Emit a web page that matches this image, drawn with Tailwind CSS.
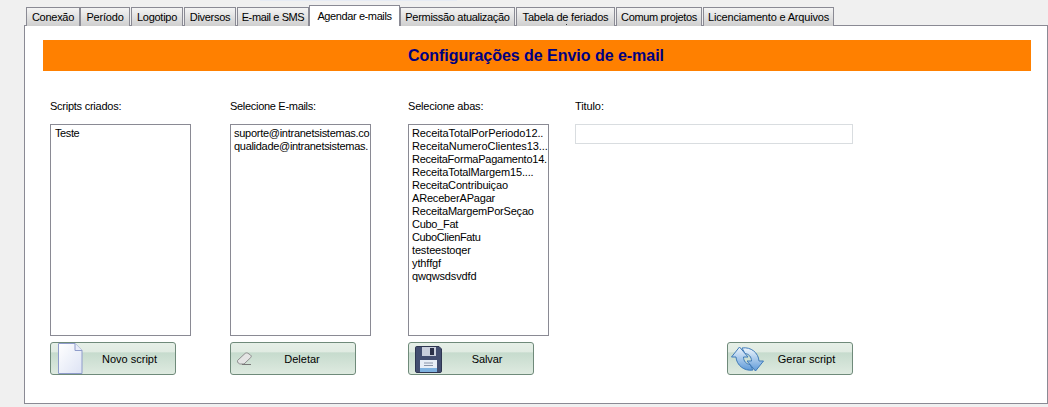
<!doctype html>
<html><head><meta charset="utf-8"><script src="https://cdn.jsdelivr.net/npm/@tailwindcss/browser@4"></script></head>
<body class="m-0 bg-[#f0f0f0]">
<div class="relative w-[1048px] h-[407px] overflow-hidden font-['Liberation_Sans',sans-serif] text-[11px] leading-[14px] text-black pl-[24px] pt-[5px]">
  <div class="absolute left-[260px] top-0 w-[197px] h-[1px] bg-[#e6ebf4]"></div>
  <div class="absolute left-[566px] top-[24px] w-[1px] h-[1px] bg-[#333] z-20"></div>
  <div class="flex items-end h-[21px] pl-[2px] relative z-10 mb-[-1px]">
    <div class="w-[54px] h-[19px] border border-b-0 border-[#8a8a94] bg-gradient-to-b from-[#f4f4f4] to-[#cfcfcf] text-center pt-[2px] tracking-[-0.27px]">Conexão</div>
    <div class="w-[50px] h-[19px] mr-[1px] border border-b-0 border-[#8a8a94] bg-gradient-to-b from-[#f4f4f4] to-[#cfcfcf] text-center pt-[2px] tracking-[-0.2px]">Período</div>
    <div class="w-[52px] h-[19px] mr-[1px] border border-b-0 border-[#8a8a94] bg-gradient-to-b from-[#f4f4f4] to-[#cfcfcf] text-center pt-[2px] tracking-[-0.25px]">Logotipo</div>
    <div class="w-[52px] h-[19px] mr-[1px] border border-b-0 border-[#8a8a94] bg-gradient-to-b from-[#f4f4f4] to-[#cfcfcf] text-center pt-[2px] tracking-[-0.28px]">Diversos</div>
    <div class="w-[72px] h-[19px] border border-b-0 border-[#8a8a94] bg-gradient-to-b from-[#f4f4f4] to-[#cfcfcf] text-center pt-[2px] tracking-[-0.38px]">E-mail e SMS</div>
    <div class="w-[91px] h-[21px] border border-b-0 border-[#8a8a94] bg-white text-center pt-[3px] tracking-[-0.4px]">Agendar e-mails</div>
    <div class="w-[115px] h-[19px] mr-[1px] border border-b-0 border-[#8a8a94] bg-gradient-to-b from-[#f4f4f4] to-[#cfcfcf] text-center pt-[2px] tracking-[-0.3px]">Permissão atualização</div>
    <div class="w-[99px] h-[19px] mr-[1px] border border-b-0 border-[#8a8a94] bg-gradient-to-b from-[#f4f4f4] to-[#cfcfcf] text-center pt-[2px] tracking-[-0.23px]">Tabela de feriados</div>
    <div class="w-[86px] h-[19px] mr-[1px] border border-b-0 border-[#8a8a94] bg-gradient-to-b from-[#f4f4f4] to-[#cfcfcf] text-center pt-[2px] tracking-[-0.35px]">Comum projetos</div>
    <div class="w-[131px] h-[19px] border border-b-0 border-[#8a8a94] bg-gradient-to-b from-[#f4f4f4] to-[#cfcfcf] text-center pt-[2px] tracking-[-0.18px]">Licenciamento e Arquivos</div>
  </div>
  <div class="h-[379px] border border-[#8a8a94] bg-white pt-[14px] pl-[18px] pr-[16px]">
    <div class="h-[31px] bg-[#ff8000] text-[#000080] font-bold text-[16px] leading-[31px] text-center pr-[2px] tracking-[-0.03px]">Configurações de Envio de e-mail</div>
    <div class="flex pl-[7px] pt-[28px]">
      <div class="w-[141px] mr-[39px]">
        <div class="h-[25px] tracking-[-0.25px]">Scripts criados:</div>
        <div class="h-[212px] border border-[#8a8a94] px-[4px] pt-[2px] leading-[13px] tracking-[-0.4px]">Teste</div>
        <button class="mt-[6px] w-[126px] h-[33px] relative rounded-[3px] border border-[#6f8a7a] bg-[linear-gradient(#e6efe7_0,#e0ebe2_30%,#c6dbcd_31%,#deeae0_100%)] pl-[33px] text-center text-[11px]">
          <svg class="absolute left-[7px] top-0" width="25" height="31" viewBox="0 0 25 31"><defs><linearGradient id="p" x1="0" y1="0" x2="1" y2="1"><stop offset="0" stop-color="#fff"/><stop offset="1" stop-color="#dde3f4"/></linearGradient></defs><path d="M0.500 0.500H17L24 7.500V30.500H0.500Z" fill="url(#p)" stroke="#8f9ccb"/><path d="M17 0.500V7.500H24" fill="#e8ecf8" stroke="#8f9ccb"/></svg>
          Novo script
        </button>
      </div>
      <div class="w-[141px] mr-[37px]">
        <div class="h-[25px] tracking-[-0.3px]">Selecione E-mails:</div>
        <div class="h-[212px] border border-[#8a8a94] pl-[3px] pt-[2px] leading-[13px] whitespace-nowrap">
          <div class="tracking-[-0.27px]">suporte@intranetsistemas.co</div>
          <div class="tracking-[-0.3px]">qualidade@intranetsistemas.</div>
        </div>
        <button class="mt-[6px] w-[126px] h-[33px] relative rounded-[3px] border border-[#6f8a7a] bg-[linear-gradient(#e6efe7_0,#e0ebe2_30%,#c6dbcd_31%,#deeae0_100%)] pl-[18px] text-center text-[11px]">
          <svg class="absolute left-[5px] top-[6px]" width="18" height="18" viewBox="0 0 18 18"><path d="M1.500 11.500L9 4.500C10 3.700 11 3.700 12 4.300L14.500 6C15.500 6.800 15.500 7.800 14.700 8.600L8 15H4.500C3 15 1 13.500 1.500 11.500Z" fill="#e4e4e4" stroke="#8d8d8d"/><path d="M6 15.500H15" stroke="#777"/></svg>
          Deletar
        </button>
      </div>
      <div class="w-[141px] mr-[26px]">
        <div class="h-[25px] tracking-[-0.2px]">Selecione abas:</div>
        <div class="h-[212px] border border-[#8a8a94] pl-[3px] pt-[2px] whitespace-nowrap leading-[13px]">
          <div class="tracking-[-0.1px]">ReceitaTotalPorPeriodo12..</div>
          <div class="tracking-[-0.07px]">ReceitaNumeroClientes13...</div>
          <div class="tracking-[-0.24px]">ReceitaFormaPagamento14.</div>
          <div class="tracking-[-0.16px]">ReceitaTotalMargem15....</div>
          <div class="tracking-[-0.17px]">ReceitaContribuiçao</div>
          <div class="tracking-[-0.18px]">AReceberAPagar</div>
          <div class="tracking-[-0.2px]">ReceitaMargemPorSeçao</div>
          <div class="tracking-[-0.27px]">Cubo_Fat</div>
          <div class="tracking-[-0.38px]">CuboClienFatu</div>
          <div class="tracking-[-0.15px]">testeestoqer</div>
          <div class="tracking-[-0.1px]">ythffgf</div>
          <div class="tracking-[-0.15px]">qwqwsdsvdfd</div>
        </div>
        <button class="mt-[6px] w-[126px] h-[33px] relative rounded-[3px] border border-[#6f8a7a] bg-[linear-gradient(#e6efe7_0,#e0ebe2_30%,#c6dbcd_31%,#deeae0_100%)] pl-[32px] text-center text-[11px] tracking-[-0.1px]">
          <svg class="absolute left-[6px] top-[3px]" width="27" height="27" viewBox="0 0 27 27"><path d="M1.500 0.500H24L26.500 3V25C26.500 26 26 26.500 25 26.500H2C1 26.500 0.500 26 0.500 25V1.500C0.500 1 1 0.500 1.500 0.500Z" fill="#434e70" stroke="#2e3650"/><rect x="7" y="1" width="14" height="9" fill="#c9cfdc"/><rect x="15" y="2" width="4" height="7" fill="#2a3048"/><rect x="5" y="14" width="17" height="12" fill="#e8eef6"/><rect x="5" y="22" width="17" height="4" fill="#7fb2e0"/><path d="M9 17H18M9 19.500H18" stroke="#8a94a8"/></svg>
          Salvar
        </button>
      </div>
      <div class="w-[278px]">
        <div class="h-[25px] tracking-[-0.1px]">Titulo:</div>
        <div class="h-[20px] border border-[#d9dde0] bg-white"></div>
        <button class="mt-[198px] ml-[152px] block w-[126px] h-[33px] relative rounded-[3px] border border-[#6f8a7a] bg-[linear-gradient(#e6efe7_0,#e0ebe2_30%,#c6dbcd_31%,#deeae0_100%)] pl-[33px] text-center text-[11px]">
          <svg class="absolute left-[3px] top-[3px]" width="33" height="26" viewBox="0 0 33 26"><defs><linearGradient id="r" x1="0" y1="0" x2="0" y2="1"><stop offset="0" stop-color="#eef6fd"/><stop offset="1" stop-color="#5f9ad8"/></linearGradient></defs><path d="M24.500 25L16 15H20.500C20.500 11 18 8 14 7.500L11 2C20 0.500 27.500 7 28 15H32.500Z" fill="url(#r)" stroke="#3f7ab8"/><path d="M8.500 1L17 11H12.500C12.500 15 15 18 19 18.500L22 24C13 25.500 5.500 19 5 11H0.500Z" fill="url(#r)" stroke="#3f7ab8"/></svg>
          Gerar script
        </button>
      </div>
    </div>
  </div>
</div>
</body></html>
